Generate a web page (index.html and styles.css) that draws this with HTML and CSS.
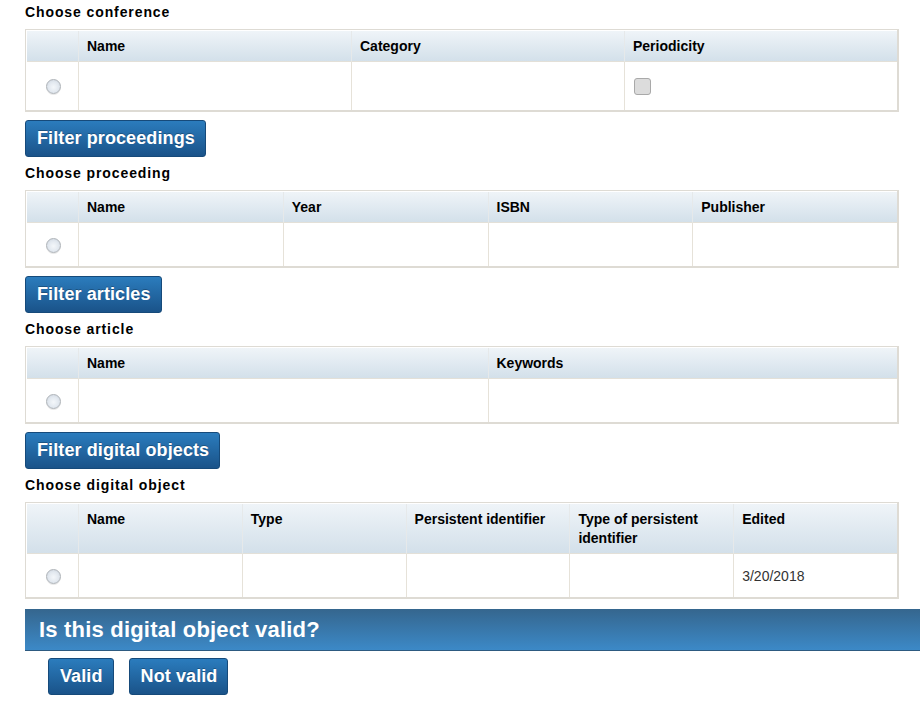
FILE: index.html
```html
<!DOCTYPE html>
<html>
<head>
<meta charset="utf-8">
<link rel="stylesheet" href="styles.css">
</head>
<body>
<div class="page">
  <div class="label">Choose conference</div>
  <table class="grid">
    <colgroup><col class="sel"><col><col><col></colgroup>
    <thead><tr><th></th><th>Name</th><th>Category</th><th>Periodicity</th></tr></thead>
    <tbody><tr class="tall"><td class="radio-cell"><span class="radio"></span></td><td></td><td></td><td><span class="check"></span></td></tr></tbody>
  </table>
  <div class="btn-row"><button class="btn">Filter proceedings</button></div>

  <div class="label">Choose proceeding</div>
  <table class="grid">
    <colgroup><col class="sel"><col><col><col><col></colgroup>
    <thead><tr><th></th><th>Name</th><th>Year</th><th>ISBN</th><th>Publisher</th></tr></thead>
    <tbody><tr><td class="radio-cell"><span class="radio"></span></td><td></td><td></td><td></td><td></td></tr></tbody>
  </table>
  <div class="btn-row"><button class="btn">Filter articles</button></div>

  <div class="label">Choose article</div>
  <table class="grid">
    <colgroup><col class="sel"><col><col></colgroup>
    <thead><tr><th></th><th>Name</th><th>Keywords</th></tr></thead>
    <tbody><tr><td class="radio-cell"><span class="radio"></span></td><td></td><td></td></tr></tbody>
  </table>
  <div class="btn-row"><button class="btn">Filter digital objects</button></div>

  <div class="label">Choose digital object</div>
  <table class="grid">
    <colgroup><col class="sel"><col><col><col><col><col></colgroup>
    <thead><tr><th></th><th>Name</th><th>Type</th><th>Persistent identifier</th><th>Type of persistent identifier</th><th>Edited</th></tr></thead>
    <tbody><tr><td class="radio-cell"><span class="radio"></span></td><td></td><td></td><td></td><td></td><td>3/20/2018</td></tr></tbody>
  </table>
</div>
<div class="question">Is this digital object valid?</div>
<div class="answers">
  <button class="btn">Valid</button>
  <button class="btn">Not valid</button>
</div>
</body>
</html>
```
FILE: styles.css
```css
html, body {
  margin: 0;
  padding: 0;
  background: #fff;
  overflow: hidden;
}
body {
  padding-left: 25px;
  font-family: "Liberation Sans", Arial, sans-serif;
  color: #000;
}
.page {
  width: 874px;
}
.label {
  font-size: 14px;
  font-weight: bold;
  letter-spacing: 0.9px;
  line-height: 18px;
  margin-bottom: 8px;
}
.page > .label:first-child {
  padding-top: 3px;
}
.grid {
  width: 874px;
  table-layout: fixed;
  border-collapse: separate;
  border-spacing: 0;
  border: 1px solid #dedbd4;
  border-right-width: 2px;
  border-bottom-width: 2px;
  padding: 1px 0 0 1px;
  font-size: 14px;
}
.grid col.sel {
  width: 51px;
}
.grid th {
  background: linear-gradient(#eff4f8, #d3e0ea);
  text-align: left;
  vertical-align: top;
  font-weight: bold;
  line-height: 19px;
  padding: 6px 8px 5px;
  border-left: 1px solid #e6e9ea;
  border-bottom: 1px solid #e3e0d8;
}
.grid th:first-child {
  border-left: none;
}
.grid td {
  height: 43px;
  padding: 0 8px;
  border-left: 1px solid #e6e2d9;
  vertical-align: middle;
  color: #333;
}
.grid tr.tall td {
  height: 48px;
}
.grid td:first-child {
  border-left: none;
}
.grid td.radio-cell {
  text-align: center;
  padding: 0;
}
.radio {
  display: inline-block;
  width: 15px;
  height: 15px;
  border-radius: 50%;
  border: 1px solid #aeb3b8;
  background: radial-gradient(circle at 50% 55%, #f4f7fa 0, #e3e9f0 50%, #c9d1db 100%);
  box-shadow: 0 1px 0 #e9e9e9;
  box-sizing: border-box;
  vertical-align: middle;
  margin-left: 1px;
}
.check {
  display: inline-block;
  width: 17px;
  height: 17px;
  border-radius: 3px;
  border: 1px solid #a9a9a9;
  background: #dcdcdc;
  box-sizing: border-box;
  vertical-align: middle;
  margin-left: 1px;
}
.btn-row {
  padding-top: 8px;
  padding-bottom: 7px;
}
.btn {
  font-family: "Liberation Sans", Arial, sans-serif;
  font-size: 18px;
  font-weight: bold;
  letter-spacing: 0.1px;
  line-height: 23px;
  color: #fff;
  padding: 6px 10px 6px 11px;
  border: 1px solid #164a7a;
  border-radius: 3px;
  background: linear-gradient(#2b7cbd, #1a5389);
  text-shadow: 0 -1px 0 rgba(0, 0, 0, 0.25);
  cursor: pointer;
  display: inline-block;
  vertical-align: top;
  margin: 0;
}
.question {
  margin-top: 10px;
  height: 41px;
  line-height: 41px;
  padding-left: 14px;
  font-size: 22px;
  font-weight: bold;
  letter-spacing: 0.2px;
  color: #fff;
  background: linear-gradient(#35668e, #3c89c7);
  border-bottom: 1px solid #2d5a80;
}
.answers {
  display: flex;
  gap: 15px;
  padding: 7px 0 0 23px;
}
```
